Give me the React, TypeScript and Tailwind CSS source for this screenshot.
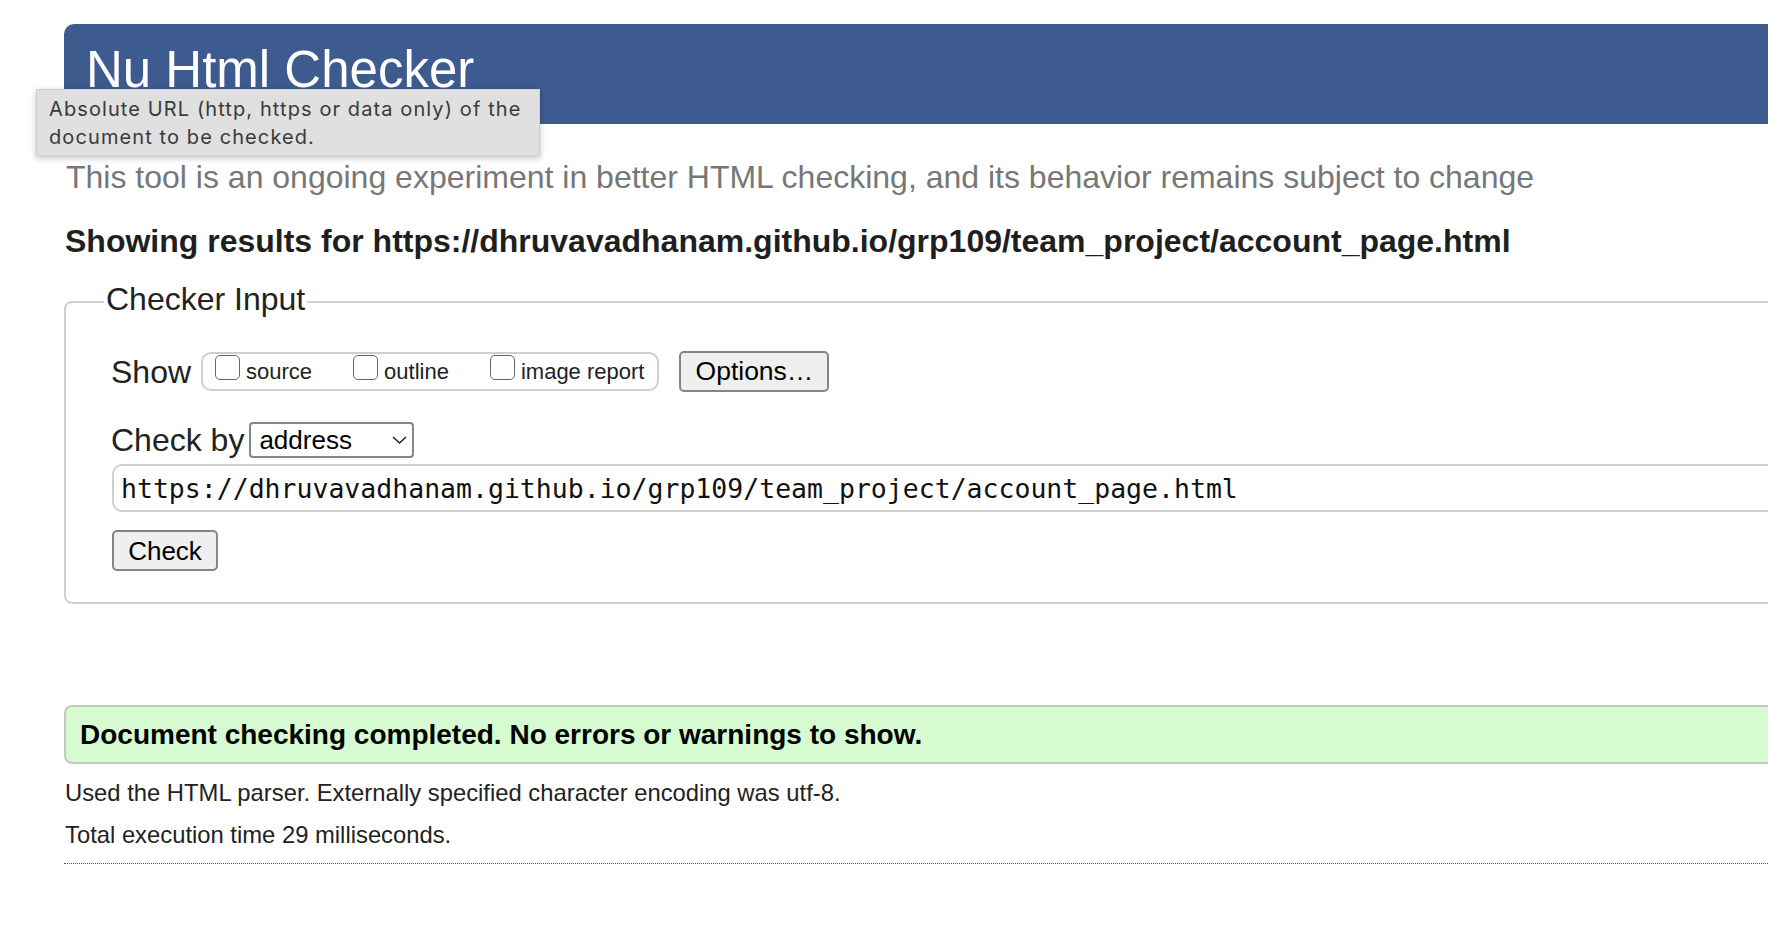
import React from "react";

const Checkbox = ({ label, first }: { label: string; first?: boolean }) => (
  <div className={`flex items-start ${first ? "" : "ml-[41px]"}`}>
    <span className="mt-[1px] block h-[25px] w-[25px] rounded-[5px] border border-[#666] bg-white" />
    <span className="ml-[6px] text-[22px] leading-[35px] text-[#222]">{label}</span>
  </div>
);

const App = () => {
  return (
    <div className="relative h-[930px] w-[1768px] overflow-hidden bg-white font-['Liberation_Sans',Arial,sans-serif] text-[#222]">
      <div className="ml-[64px] w-[1760px] pt-[24px]">
        <header className="h-[100px] rounded-t-[10px] bg-[#3d5b8f] pl-[22px] pt-[20px]">
          <h1 className="text-[51px] leading-[51px] text-white">Nu Html Checker</h1>
        </header>

        <p className="mt-[34px] pl-[2px] text-[32px] leading-[38px] text-[#777]">
          This tool is an ongoing experiment in better HTML checking, and its behavior remains subject to change
        </p>
        <h2 className="mt-[26px] pl-[1px] text-[32px] font-bold leading-[38px] text-[#1f1f1f]">
          Showing results for https://dhruvavadhanam.github.io/grp109/team_project/account_page.html
        </h2>

        <fieldset className="mt-[22px] rounded-[8px] border-2 border-[#d0d0d0] pb-[31px] pl-[38px] pt-[30px]">
          <legend className="px-[2px] pb-[5px] text-[32px] leading-[34px] text-[#222]">Checker Input</legend>
          <div className="ml-[7px]">
            <div className="flex h-[41px] items-center">
              <span className="text-[32px] leading-[34px]">Show</span>
              <div className="ml-[10px] flex h-[39px] items-start rounded-[10px] border-2 border-[#d0d0d0] pl-[12px] pr-[13px]">
                <Checkbox label="source" first />
                <Checkbox label="outline" />
                <Checkbox label="image report" />
              </div>
              <button className="ml-[20px] h-[41px] w-[150px] rounded-[5px] border-2 border-[#858585] bg-[#efefef] text-[26.5px] leading-none text-black">
                Options…
              </button>
            </div>

            <div className="mt-[30px] flex h-[36px] items-center">
              <span className="text-[32px] leading-[34px]">Check by</span>
              <div className="ml-[5px] flex h-[36px] w-[165px] items-center justify-between rounded-[4px] border-2 border-[#858585] bg-white pl-[8px] pr-[5px]">
                <span className="text-[26px] leading-none text-black">address</span>
                <svg width="15" height="8" viewBox="0 0 15 8" fill="none">
                  <polyline points="1,1 7.5,7 14,1" stroke="#222" strokeWidth="1.5" />
                </svg>
              </div>
            </div>

            <div className="ml-[1px] mt-[6px] flex h-[48px] items-center rounded-[10px] border-2 border-[#cfcfcf] bg-white pl-[7px] pt-[3px]">
              <span className="font-['DejaVu_Sans_Mono',monospace] text-[26.5px] leading-none text-[#111]">
                https://dhruvavadhanam.github.io/grp109/team_project/account_page.html
              </span>
            </div>

            <button className="ml-[1px] mt-[18px] block h-[41px] w-[106px] rounded-[5px] border-2 border-[#858585] bg-[#efefef] text-[26px] leading-none text-black">
              Check
            </button>
          </div>
        </fieldset>

        <div className="mt-[101px] flex h-[59px] items-center rounded-[8px] border-2 border-[#c6c6c6] bg-[#d6fbd0] pl-[14px]">
          <p className="text-[28px] font-bold leading-[32px] text-black">
            Document checking completed. No errors or warnings to show.
          </p>
        </div>

        <p className="mt-[15px] pl-[1px] text-[23.8px] leading-[28px] text-[#222]">
          Used the HTML parser. Externally specified character encoding was utf-8.
        </p>
        <p className="mt-[14px] pl-[1px] text-[23.8px] leading-[28px] text-[#222]">Total execution time 29 milliseconds.</p>
        <div className="mt-[14px] border-t border-dotted border-[#555]" />
      </div>

      <div className="absolute left-[36px] top-[89px] h-[67px] w-[504px] border border-[#cfcfcf] bg-[#dfe0df] pl-[12px] pt-[5px] shadow-[0_2px_6px_rgba(0,0,0,0.25)]">
        <p className="font-['Inter',sans-serif] text-[20px] leading-[28px] tracking-[1.1px] text-[#3a3a3a]">
          Absolute URL (http, https or data only) of the
          <br />
          document to be checked.
        </p>
      </div>
    </div>
  );
};

export default App;
